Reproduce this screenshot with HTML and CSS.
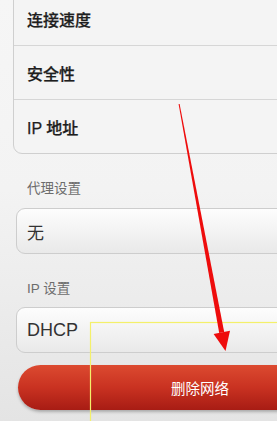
FILE: index.html
```html
<!DOCTYPE html>
<html lang="zh">
<head>
<meta charset="utf-8">
<link rel="stylesheet" href="styles.css">
</head>
<body>
<div class="page">
  <div class="group">
    <div class="row">连接速度</div>
    <div class="row">安全性</div>
    <div class="row last">IP 地址</div>
  </div>
  <div class="label">代理设置</div>
  <div class="field">无</div>
  <div class="label">IP 设置</div>
  <div class="field latin">DHCP</div>
  <div class="button">删除网络</div>
</div>
<svg class="overlay" width="277" height="421" viewBox="0 0 277 421">
  <rect x="90.5" y="322.5" width="300" height="200" fill="none" stroke="#f4f06a" stroke-width="1.2"/>
  <polygon points="178.6,104 179.6,104 224.2,332 219.2,333" fill="#ee0c0c"/>
  <polygon points="213.6,334 230,330.8 225.5,351" fill="#ee0c0c"/>
</svg>
</body>
</html>
```
FILE: styles.css
```css
html, body {
  margin: 0;
  padding: 0;
}
body {
  width: 277px;
  height: 421px;
  overflow: hidden;
  position: relative;
  background: linear-gradient(#f6f6f6, #f3f3f3 45%, #e4e4e4);
  font-family: "Liberation Sans", "Noto Sans CJK SC", sans-serif;
  color: #222;
}
.page {
  padding-left: 13px;
  display: flex;
  flex-direction: column;
  overflow: hidden;
}
.group {
  margin-top: -9px;
  margin-right: -30px;
  border: 1px solid #cfcfcf;
  border-radius: 0 0 0 9px;
  background: #f4f4f4;
}
.row {
  box-sizing: border-box;
  height: 54px;
  border-bottom: 1px solid #d6d6d6;
  display: flex;
  align-items: center;
  padding-left: 13px;
  font-size: 16px;
  font-weight: 500;
  color: #1e1e1e;
  -webkit-text-stroke: 0.25px #1e1e1e;
}
.row.last {
  height: 53px;
  border-bottom: none;
}
.label {
  margin-top: 27px;
  padding-left: 14px;
  font-size: 13.5px;
  line-height: 16px;
  color: #6c6c6c;
}
.field {
  box-sizing: border-box;
  margin-top: 11px;
  margin-left: 3px;
  margin-right: -30px;
  height: 46px;
  border: 1px solid #cdcdcd;
  border-radius: 9px;
  background: linear-gradient(#fdfdfd, #f3f3f3 50%, #e9e9e9);
  display: flex;
  align-items: center;
  padding-left: 10px;
  font-size: 17px;
  color: #333;
}
.field.latin {
  margin-top: 10px;
  font-size: 18px;
}
.button {
  box-sizing: border-box;
  margin-top: 12px;
  margin-left: 5px;
  margin-bottom: 6px;
  width: 364px;
  height: 45px;
  border-radius: 23px;
  background: linear-gradient(#dc4a30, #c93221 50%, #a71c14);
  box-shadow: 0 2px 3px rgba(0,0,0,0.25);
  display: flex;
  align-items: center;
  justify-content: center;
  color: #fff;
  font-size: 14.5px;
}
.overlay {
  position: absolute;
  left: 0;
  top: 0;
}
```
